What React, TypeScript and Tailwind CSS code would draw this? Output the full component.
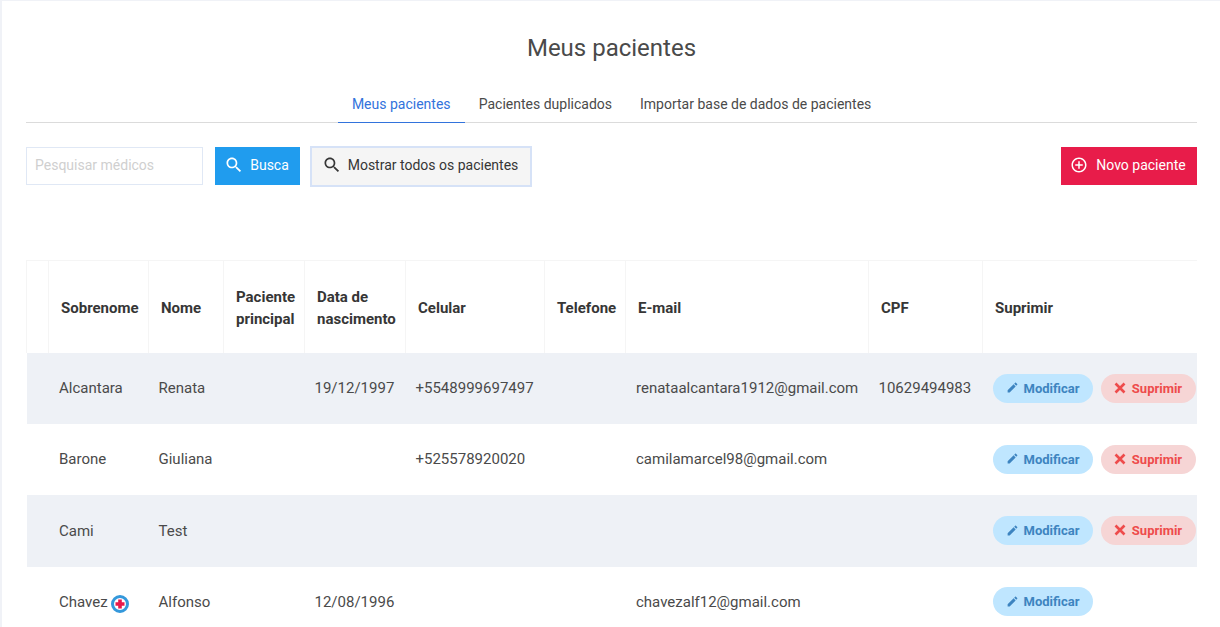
const SEARCH =
  "M15.5 14h-.79l-.28-.27C15.41 12.59 16 11.11 16 9.5 16 5.91 13.09 3 9.5 3S3 5.91 3 9.5 5.91 16 9.5 16c1.61 0 3.09-.59 4.23-1.57l.27.28v.79l5 4.99L20.49 19l-4.99-5zm-6 0C7.01 14 5 11.99 5 9.5S7.01 5 9.5 5 14 7.01 14 9.5 11.99 14 9.5 14z";
const EDIT =
  "M3 17.25V21h3.75L17.81 9.94l-3.75-3.75L3 17.25zM20.71 7.04c.39-.39.39-1.02 0-1.41l-2.34-2.34c-.39-.39-1.02-.39-1.41 0l-1.83 1.83 3.75 3.75 1.83-1.83z";
const ADD =
  "M13 7h-2v4H7v2h4v4h2v-4h4v-2h-4V7zm-1-5C6.48 2 2 6.48 2 12s4.48 10 10 10 10-4.48 10-10S17.52 2 12 2zm0 18c-4.41 0-8-3.59-8-8s3.59-8 8-8 8 3.59 8 8-3.59 8-8 8z";

function Icon({ d, className }: { d: string; className: string }) {
  return (
    <svg viewBox="0 0 24 24" fill="currentColor" className={className}>
      <path d={d} />
    </svg>
  );
}

const columns = [
  { label: "", width: 22 },
  { label: "Sobrenome", width: 100 },
  { label: "Nome", width: 75 },
  { label: "Paciente principal", width: 81 },
  { label: "Data de nascimento", width: 101 },
  { label: "Celular", width: 139 },
  { label: "Telefone", width: 81 },
  { label: "E-mail", width: 243 },
  { label: "CPF", width: 114 },
  { label: "Suprimir", width: 214 },
];

const patients = [
  {
    last: "Alcantara",
    first: "Renata",
    birth: "19/12/1997",
    mobile: "+5548999697497",
    email: "renataalcantara1912@gmail.com",
    cpf: "10629494983",
    height: "h-[71px]",
  },
  {
    last: "Barone",
    first: "Giuliana",
    birth: "",
    mobile: "+525578920020",
    email: "camilamarcel98@gmail.com",
    cpf: "",
    height: "h-[71px]",
  },
  {
    last: "Cami",
    first: "Test",
    birth: "",
    mobile: "",
    email: "",
    cpf: "",
    height: "h-[72px] [&>td:not(:last-child)]:pt-[2px]",
  },
  {
    last: "Chavez",
    first: "Alfonso",
    birth: "12/08/1996",
    mobile: "",
    email: "chavezalf12@gmail.com",
    cpf: "",
    height: "h-[70px] [&>td:not(:last-child)]:pt-[2px]",
    main: true,
  },
];

function MainBadge() {
  return (
    <span className="mt-[2px] ml-[3.5px] inline-flex h-[18px] w-[18px] items-center justify-center rounded-full border-[3px] border-[#3498db] bg-white">
      <svg viewBox="0 0 10 10" className="h-[10px] w-[10px]">
        <path d="M3.2 0.5h3.6v2.7h2.7v3.6h-2.7v2.7h-3.6v-2.7h-2.7v-3.6h2.7z" fill="#e8194b" />
      </svg>
    </span>
  );
}

export default function App() {
  return (
    <div
      className="h-[627px] w-[1220px] overflow-hidden border-t border-l-2 border-[#f0f2f7] bg-white text-[#4a4a4a]"
      style={{ fontFamily: "Roboto, sans-serif" }}
    >
      <div className="pr-[23px] pl-[24px]">
        <h1 className="pt-[32px] text-center text-2xl leading-[30px] text-[#4a4a4a]">Meus pacientes</h1>

        {/* tabs */}
        <div className="mt-[22px] flex h-[38px] justify-center border-b border-[#dbdbdb] text-sm">
          <a className="-mb-px flex h-[38px] w-[127px] items-center justify-center border-b border-[#3273dc] text-[#3273dc]">
            Meus pacientes
          </a>
          <a className="flex h-[37px] items-center px-[14px]">Pacientes duplicados</a>
          <a className="flex h-[37px] items-center px-[14px]">Importar base de dados de pacientes</a>
        </div>

        {/* search bar */}
        <div className="mt-[24px] flex h-[38px] items-center text-sm">
          <input
            placeholder="Pesquisar médicos"
            className="h-[38px] w-[177px] border border-[#e0e8f5] bg-white px-2 pb-[2px] text-sm outline-none placeholder:text-[#cfcfcf]"
          />
          <button className="ml-3 flex h-[38px] w-[85px] items-center justify-center gap-[6px] bg-[#209cee] pr-[2px] pb-[2px] text-white">
            <Icon d={SEARCH} className="h-[20px] w-[20px]" />
            Busca
          </button>
          <button className="ml-[10px] flex h-[41px] w-[222px] items-center justify-center gap-[6px] border-2 border-[#d6e2f7] bg-[#f5f5f5] pr-[2px] pb-[2px] text-[#363636]">
            <Icon d={SEARCH} className="h-[20px] w-[20px]" />
            Mostrar todos os pacientes
          </button>
          <button className="ml-auto flex h-[38px] w-[136px] items-center justify-center gap-[8px] bg-[#e81c4a] pr-[2px] pb-[2px] text-white">
            <Icon d={ADD} className="h-[18px] w-[18px]" />
            Novo paciente
          </button>
        </div>

        {/* patients */}
        <table className="mt-[75px] w-[1170px] table-fixed border-collapse text-[15px]">
          <colgroup>
            {columns.map((c, i) => (
              <col key={i} style={{ width: c.width }} />
            ))}
          </colgroup>
          <thead>
            <tr className="h-[92px] border-t border-[#f5f5f5]">
              {columns.map((c, i) => (
                <th
                  key={i}
                  className="border-l border-[#f5f5f5] px-3 pt-[3px] text-left align-middle leading-[22px] font-bold text-[#363636]"
                >
                  {c.label}
                </th>
              ))}
            </tr>
          </thead>
          <tbody>
            {patients.map((p, i) => (
              <tr key={p.last} className={`${p.height} ${i % 2 === 0 ? "bg-[#eef1f6]" : "bg-white"}`}>
                <td />
                <td className="whitespace-nowrap pr-[10px] pl-[10.5px]">
                  <span className="inline-flex items-center">
                    {p.last}
                    {p.main && <MainBadge />}
                  </span>
                </td>
                <td className="px-[10px]">{p.first}</td>
                <td />
                <td className="whitespace-nowrap px-[10px]">{p.birth}</td>
                <td className="whitespace-nowrap px-[10px]">{p.mobile}</td>
                <td />
                <td className="whitespace-nowrap pr-[10px] pl-[10.5px]">{p.email}</td>
                <td className="whitespace-nowrap px-[10px]">{p.cpf}</td>
                <td className="pl-[10px]">
                  <div className="flex gap-2">
                    <button className="flex h-[29px] w-[100px] items-center justify-center gap-[5px] rounded-full bg-[#bfe6ff] pt-px text-[13px] font-bold text-[#3d84c0]">
                      <Icon d={EDIT} className="-mt-[2px] h-[13px] w-[13px]" />
                      Modificar
                    </button>
                    {!p.main && (
                      <button className="flex h-[29px] w-[95px] items-center justify-center gap-[6px] rounded-full bg-[#f6d5d5] pt-px text-[13px] font-bold text-[#ee4b4b]">
                        <svg viewBox="0 0 12 12" className="-mt-[2px] h-[12px] w-[12px]">
                          <path d="M1.5 1.5l9 9M10.5 1.5l-9 9" stroke="currentColor" strokeWidth="2.6" fill="none" />
                        </svg>
                        Suprimir
                      </button>
                    )}
                  </div>
                </td>
              </tr>
            ))}
          </tbody>
        </table>
      </div>
    </div>
  );
}
